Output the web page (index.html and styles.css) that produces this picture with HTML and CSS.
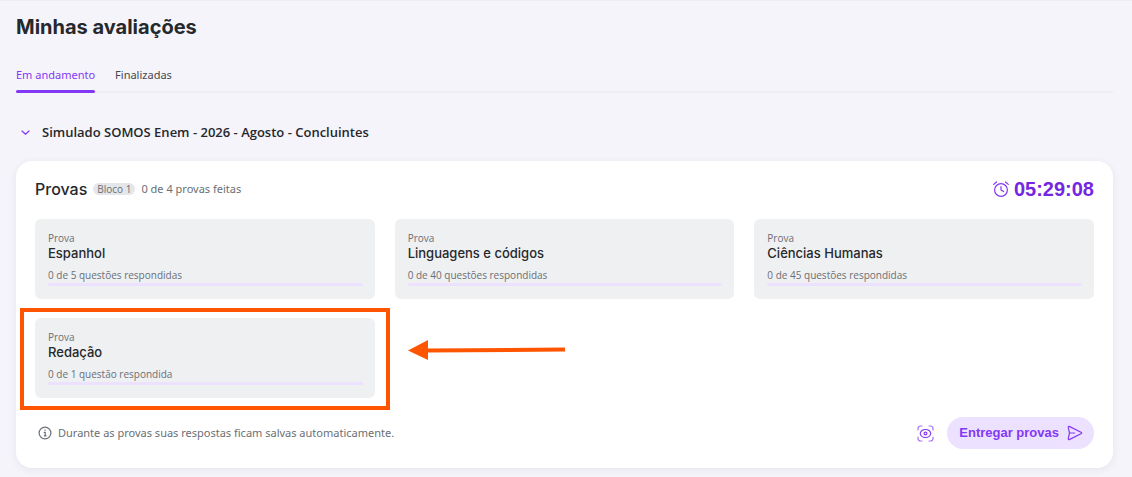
FILE: index.html
```html
<!DOCTYPE html>
<html lang="pt-BR">
  <head>
    <meta charset="utf-8">
    <meta name="viewport" content="width=device-width, initial-scale=1">
    <title>Minhas avaliações</title>
    <link rel="stylesheet" href="styles.css">
  </head>
  <body>
    <main class="page">
      <h1>Minhas avaliações</h1>

      <nav class="tabs">
        <a class="tab active" href="#andamento" aria-current="page">Em andamento</a>
        <a class="tab" href="#finalizadas">Finalizadas</a>
      </nav>

      <section id="andamento">
        <h2>
          <button class="toggle" type="button" aria-expanded="true" aria-controls="simulado">
            <svg width="10" height="10" viewBox="0 0 10 10"><path d="M2 4 5.500 7.200 9 4"/></svg>
            <span>Simulado SOMOS Enem - 2026 - Agosto - Concluintes</span>
          </button>
        </h2>

        <div class="panel" id="simulado">
          <header class="panel-head">
            <h3>Provas</h3>
            <span class="badge">Bloco 1</span>
            <span class="done">0 de 4 provas feitas</span>
            <div class="timer">
              <svg width="16" height="16" viewBox="0 0 16 16">
                <circle cx="8" cy="9" r="6.400"/>
                <path d="M8 5.500V9l2.600 1.600M.7 3.400 3.500 1M15.300 3.400 12.500 1"/>
              </svg>
              <time>05:29:08</time>
            </div>
          </header>

          <div class="tests">
            <a class="test" href="#espanhol">
              <span class="kind">Prova</span>
              <strong>Espanhol</strong>
              <span class="count">0 de 5 questões respondidas</span>
              <span class="bar"></span>
            </a>
            <a class="test" href="#linguagens">
              <span class="kind">Prova</span>
              <strong>Linguagens e códigos</strong>
              <span class="count">0 de 40 questões respondidas</span>
              <span class="bar"></span>
            </a>
            <a class="test" href="#humanas">
              <span class="kind">Prova</span>
              <strong>Ciências Humanas</strong>
              <span class="count">0 de 45 questões respondidas</span>
              <span class="bar"></span>
            </a>
            <a class="test marked" href="#redacao">
              <span class="kind">Prova</span>
              <strong>Redação</strong>
              <span class="count">0 de 1 questão respondida</span>
              <span class="bar"></span>
              <svg class="arrow" width="158" height="22" viewBox="0 0 158 22">
                <path d="M0 11.500 20 1v20z"/>
                <path d="M19 9.500 157 8.500v4L19 13.500z"/>
              </svg>
            </a>
          </div>

          <footer class="panel-foot">
            <p class="note">
              <svg width="14" height="14" viewBox="0 0 14 14">
                <circle cx="7" cy="7" r="5.900"/>
                <path d="M6.200 6.400H7.200V9.800M6.300 9.800h1.800"/>
                <path d="M7 3.900v.4"/>
              </svg>
              Durante as provas suas respostas ficam salvas automaticamente.
            </p>
            <button class="focus" type="button" aria-label="Modo foco">
              <svg width="17" height="17" viewBox="0 0 17 17">
                <path class="frame" d="M1 5V3.500A2.500 2.500 0 0 1 3.500 1H5M12 1h1.500A2.500 2.500 0 0 1 16 3.500V5M16 12v1.500a2.500 2.500 0 0 1-2.500 2.500H12M5 16H3.500A2.500 2.500 0 0 1 1 13.500V12"/>
                <path d="M3.200 8.500C3.700 6 6 4.500 8.500 4.500s4.800 1.500 5.300 4c-.5 2.500-2.800 4-5.300 4S3.700 11 3.200 8.500z"/>
                <circle cx="8.500" cy="8.500" r="1.400"/>
              </svg>
            </button>
            <button class="submit" type="button">
              Entregar provas
              <svg width="16" height="16" viewBox="0 0 16 16">
                <path d="M2.700 1.600 14 7.200q1.300.8 0 1.600L2.700 14.400Q1 15 1.300 13.300L2.500 8 1.300 2.700Q1 1 2.700 1.600zM2.500 8h5"/>
              </svg>
            </button>
          </footer>
        </div>
      </section>
    </main>
  </body>
</html>
```
FILE: styles.css
```css
* {
	box-sizing: border-box;
	margin: 0;
	padding: 0;
}

body {
	background: #f5f4fa;
	border-top: 1px solid #eeedf3;
	color: #25282c;
	font: 11px/16px "Noto Sans", "Open Sans", sans-serif;
}

a {
	color: inherit;
	text-decoration: none;
}

button {
	border: none;
	background: none;
	font: inherit;
	color: inherit;
	cursor: pointer;
}

svg {
	display: block;
	flex: none;
	fill: none;
	stroke: #8338f5;
	stroke-width: 1.2;
	stroke-linecap: round;
	stroke-linejoin: round;
}

.page {
	padding: 12px 19px 9px 16px;
}

h1 {
	font: 700 20px/28px Inter, sans-serif;
}

/* abas */
.tabs {
	display: flex;
	gap: 20px;
	margin-top: 26px;
	box-shadow: inset 0 -2px #efeef4;
}
.tab {
	padding-bottom: 7px;
	border-bottom: 3px solid transparent;
	color: #45494e;
}
.tab.active {
	color: #8338f5;
	position: relative;
}
.tab.active::after {
	content: "";
	position: absolute;
	left: 0;
	right: 0;
	bottom: -3px;
	height: 3px;
	border-radius: 2px;
	background: #8338f5;
}

.toggle {
	display: flex;
	align-items: center;
	gap: 12px;
	margin: 29px 0 19px;
	padding-left: 4px;
	font: 600 13px/20px "Open Sans", "Noto Sans", sans-serif;
}

/* painel do simulado */
.panel {
	padding: 16px 19px 19px;
	border-radius: 16px;
	background: #fff;
	box-shadow: 0 2px 8px rgba(40, 30, 80, .07);
}
.panel-head {
	display: flex;
	align-items: center;
	margin-bottom: 18px;
	line-height: 24px;
}
.panel-head h3 {
	font: 500 16px/24px Inter, sans-serif;
}
.badge {
	margin: 0 6px;
	padding: 0 4px;
	border-radius: 6px;
	background: #e4e6e9;
	color: #6a6f75;
	font: 10px/12px "Open Sans", "Noto Sans", sans-serif;
}
.done,
.note {
	color: #6a6f75;
}
.timer {
	display: flex;
	align-items: center;
	gap: 5px;
	margin-left: auto;
	color: #7427e0;
	font: 700 20px/24px "Liberation Sans", Arial, sans-serif;
}

.tests {
	display: grid;
	grid-template-columns: repeat(3, 1fr);
	gap: 19px 20px;
}
.test {
	display: flex;
	flex-direction: column;
	padding: 12px 12px 13px 13px;
	border-radius: 6px;
	background: #eff0f2;
	color: #6a6f75;
	font: 10px/14px "Open Sans", "Noto Sans", sans-serif;
}
.test strong {
	margin-bottom: 7px;
	color: #25282c;
	font: 500 13px/16px Inter, sans-serif;
}
.bar {
	height: 3px;
	margin-top: 1px;
	border-radius: 2px;
	background: #ece1fe;
}

/* destaque da redação */
.marked {
	position: relative;
}
.marked::before {
	content: "";
	position: absolute;
	inset: -10px -15px -12px;
	border: 4px solid #ff5500;
}
.arrow {
	position: absolute;
	left: 100%;
	top: 21px;
	margin-left: 33px;
	fill: #ff5500;
	stroke: none;
}

.panel-foot {
	display: flex;
	align-items: center;
	margin-top: 19px;
}
.note {
	display: flex;
	align-items: center;
	gap: 6px;
	margin-right: auto;
	padding-left: 3px;
}
.note svg {
	stroke: #6a6f75;
}
.focus {
	margin-right: 13px;
}
.focus .frame {
	stroke: #a873f8;
}
.submit {
	display: flex;
	align-items: center;
	gap: 8px;
	padding: 0 11px 0 12px;
	border-radius: 16px;
	background: #ece1fe;
	color: #8338f5;
	font: 700 13px/32px "Liberation Sans", Arial, sans-serif;
}
```
